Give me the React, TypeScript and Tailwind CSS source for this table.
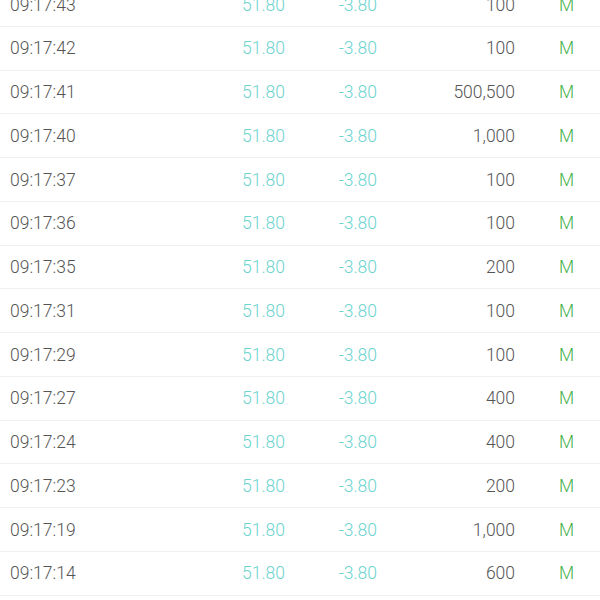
import React from "react";

const rows: [string, string][] = [
  ["09:17:43", "100"],
  ["09:17:42", "100"],
  ["09:17:41", "500,500"],
  ["09:17:40", "1,000"],
  ["09:17:37", "100"],
  ["09:17:36", "100"],
  ["09:17:35", "200"],
  ["09:17:31", "100"],
  ["09:17:29", "100"],
  ["09:17:27", "400"],
  ["09:17:24", "400"],
  ["09:17:23", "200"],
  ["09:17:19", "1,000"],
  ["09:17:14", "600"],
  ["09:17:10", "100"],
];

export default function App() {
  return (
    <div
      className="w-[600px] h-[600px] overflow-hidden bg-white"
      style={{ fontFamily: "Roboto, 'Noto Sans', sans-serif" }}
    >
      <div className="-mt-[17px] flex flex-col">
        {rows.map(([t, v], i) => (
          <div
            key={i}
            className="flex items-center h-[43.75px] shrink-0 border-b border-[#efefef] text-[17.5px] leading-none font-light pt-[2px]"
          >
            <div className="w-[200px] pl-[10px] text-[#555555]">{t}</div>
            <div className="w-[85px] text-right text-[#6cd3ce]">51.80</div>
            <div className="w-[92px] text-right text-[#6cd3ce]">-3.80</div>
            <div className="w-[138px] text-right text-[#555555]">{v}</div>
            <div className="w-[85px] pl-[44px] text-[#45b04a]">M</div>
          </div>
        ))}
      </div>
    </div>
  );
}
